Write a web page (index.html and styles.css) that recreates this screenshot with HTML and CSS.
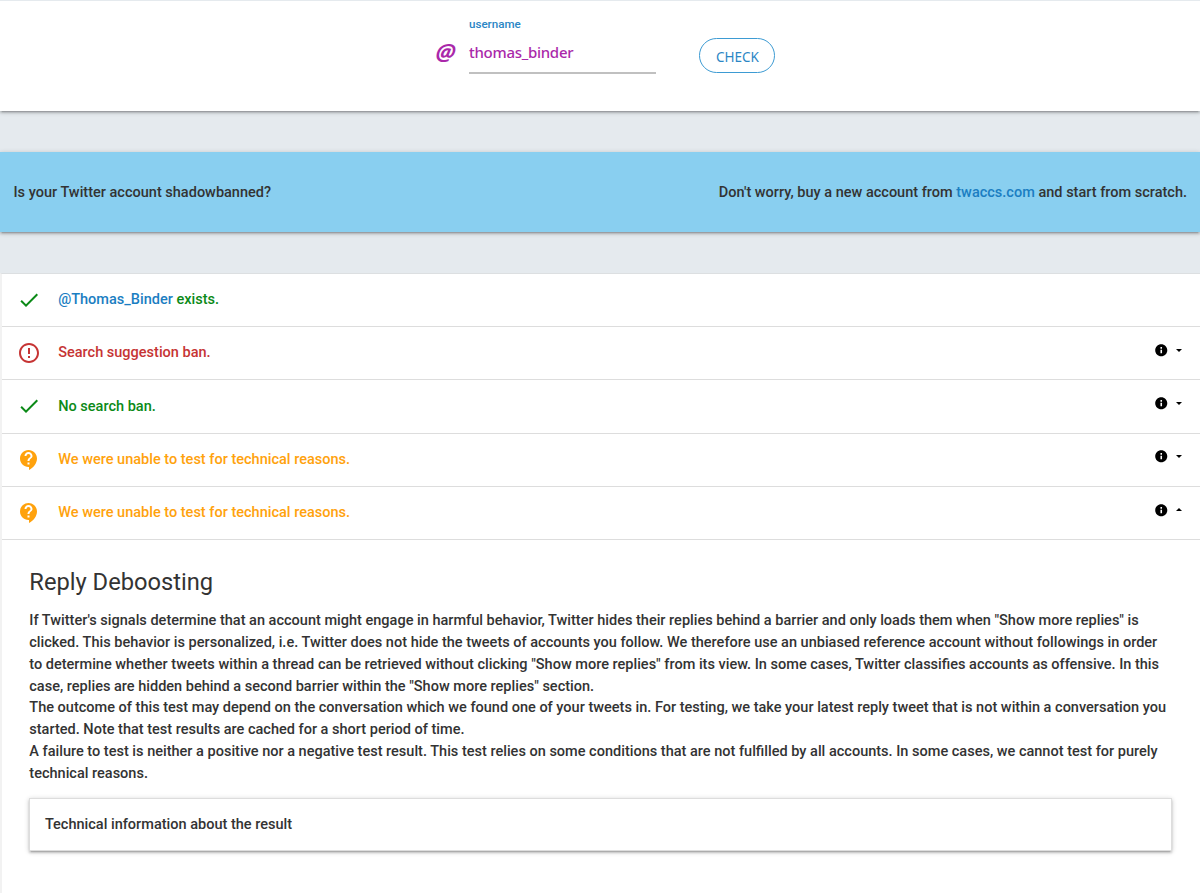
FILE: index.html
```html
<!DOCTYPE html>
<html lang="en">
<head>
<meta charset="utf-8">
<title>Shadowban Test</title>
<link rel="stylesheet" href="styles.css">
</head>
<body>
<svg class="defs" aria-hidden="true">
  <symbol id="check" viewBox="0 0 24 24"><path d="M9 16.17L4.83 12l-1.42 1.41L9 19 21 7l-1.41-1.41z"/></symbol>
  <symbol id="error" viewBox="0 0 24 24"><path d="M11 15h2v2h-2zm0-8h2v6h-2zm.99-5C6.47 2 2 6.48 2 12s4.47 10 9.99 10C17.52 22 22 17.52 22 12S17.52 2 11.99 2zM12 20c-4.42 0-8-3.58-8-8s3.58-8 8-8 8 3.58 8 8-3.58 8-8 8z"/></symbol>
  <symbol id="help" viewBox="0 0 24 24"><path d="M11.5 2C6.81 2 3 5.81 3 10.5S6.81 19 11.5 19h.5v3c4.86-2.34 8-7 8-11.5C20 5.81 16.19 2 11.5 2zm1 14.500h-2v-2h2v2zm0-3.500h-2c0-3.250 3-3 3-5 0-1.100-.9-2-2-2s-2 .9-2 2h-2c0-2.210 1.790-4 4-4s4 1.790 4 4c0 2.500-3 2.750-3 5z"/></symbol>
  <symbol id="info" viewBox="0 0 24 24"><path d="M12 2C6.480 2 2 6.480 2 12s4.480 10 10 10 10-4.480 10-10S17.520 2 12 2zm1.300 15h-2.600v-6h2.600v6zm0-7.600h-2.600V6.800h2.600v2.600z"/></symbol>
  <symbol id="down" viewBox="0 0 6 3"><path d="M0 0h6L3 3z"/></symbol>
  <symbol id="up" viewBox="0 0 6 3"><path d="M0 3h6L3 0z"/></symbol>
</svg>
<section class="search">
  <span class="at">@</span>
  <div class="field">
    <span class="label">username</span>
    <span class="value">thomas_binder</span>
  </div>
  <button class="check">CHECK</button>
</section>
<section class="promo">
  <span class="promo-question">Is your Twitter account shadowbanned?</span>
  <span class="promo-offer">Don't worry, buy a new account from <a>twaccs.com</a> and start from scratch.</span>
</section>
<section class="results">
  <div class="row ok"><svg class="icon"><use href="#check"/></svg><span class="exists"><a>@Thomas_Binder</a> exists.</span></div>
  <div class="row bad"><svg class="icon"><use href="#error"/></svg><span class="ban">Search suggestion ban.</span><span class="more"><svg class="info"><use href="#info"/></svg><svg class="caret"><use href="#down"/></svg></span></div>
  <div class="row ok"><svg class="icon"><use href="#check"/></svg><span>No search ban.</span><span class="more"><svg class="info"><use href="#info"/></svg><svg class="caret"><use href="#down"/></svg></span></div>
  <div class="row warn"><svg class="icon"><use href="#help"/></svg><span>We were unable to test for technical reasons.</span><span class="more"><svg class="info"><use href="#info"/></svg><svg class="caret"><use href="#down"/></svg></span></div>
  <div class="row warn"><svg class="icon"><use href="#help"/></svg><span>We were unable to test for technical reasons.</span><span class="more"><svg class="info"><use href="#info"/></svg><svg class="caret"><use href="#up"/></svg></span></div>
  <div class="details">
    <h2>Reply Deboosting</h2>
    <p>If Twitter's signals determine that an account might engage in harmful behavior, Twitter hides their replies behind a barrier and only loads them when "Show more replies" is<br>clicked. This behavior is personalized, i.e. Twitter does not hide the tweets of accounts you follow. We therefore use an unbiased reference account without followings in order<br>to determine whether tweets within a thread can be retrieved without clicking "Show more replies" from its view. In some cases, Twitter classifies accounts as offensive. In this<br>case, replies are hidden behind a second barrier within the "Show more replies" section.<br>The outcome of this test may depend on the conversation which we found one of your tweets in. For testing, we take your latest reply tweet that is not within a conversation you<br>started. Note that test results are cached for a short period of time.<br>A failure to test is neither a positive nor a negative test result. This test relies on some conditions that are not fulfilled by all accounts. In some cases, we cannot test for purely<br>technical reasons.</p>
    <div class="tech">Technical information about the result</div>
  </div>
</section>
</body>
</html>
```
FILE: styles.css
```css
* { box-sizing: border-box; }
body {
  margin: 0;
  height: 893px;
  overflow: hidden;
  display: flex;
  flex-direction: column;
  background: #e5eaee;
  color: #333;
  font: 500 14.52px/21.77px Roboto, sans-serif;
  white-space: nowrap;
}
a { color: #1b7ec2; }
.defs { display: none; }
svg { display: block; fill: currentColor; }
.search {
  flex: none;
  height: 111px;
  display: flex;
  align-items: flex-start;
  padding-left: 436px;
  background: #fff;
  border-top: 1px solid #e5eaee;
  box-shadow: 0 2px 2px rgba(0,0,0,.14), 0 3px 1px -2px rgba(0,0,0,.12), 0 1px 5px rgba(0,0,0,.2);
}
.at {
  width: 33px;
  padding: 39px 0 0 3px;
  font: italic 700 22.5px/24px "Open Sans", sans-serif;
  color: #aa28aa;
  transform: skewX(-9deg);
}
.field {
  width: 187px;
  height: 73px;
  display: flex;
  flex-direction: column;
  padding-top: 14px;
  border-bottom: 2px solid #c0c0c0;
}
.label { font-size: 11.6px; line-height: 19px; color: #2b86c5; }
.value { margin-top: 6px; font: 500 15px/24px "Noto Sans", sans-serif; letter-spacing: -.28px; color: #aa28aa; }
.check {
  width: 76px;
  height: 35px;
  margin: 37px 0 0 43.4px;
  padding: 2px 0 0;
  border: 1px solid #3d9bd3;
  border-radius: 18px;
  background: #fff;
  color: #2b86c5;
  font: 400 13.5px/30px "Noto Sans", sans-serif;
}
.promo {
  flex: none;
  height: 80px;
  margin-top: 41px;
  padding: 1px 13px 0 13.5px;
  display: flex;
  align-items: center;
  justify-content: space-between;
  background: #89cff0;
  box-shadow: 0 2px 2px rgba(0,0,0,.14), 0 3px 1px -2px rgba(0,0,0,.12), 0 1px 5px rgba(0,0,0,.2);
}
.results {
  flex: 1;
  margin-top: 41px;
  background: #fff;
  border-top: 1px solid #dcdfe1;
  border-left: 2px solid #f2f2f2;
}
.row {
  height: 53.2px;
  padding: 0 18px 0 15px;
  display: flex;
  align-items: center;
  border-bottom: 1px solid #ddd;
}
.icon { width: 24px; height: 24px; margin-right: 17.2px; }
.ok { color: #0b8a17; }
.bad { color: #c63434; }
.warn { color: #ffa20d; }
.more { display: flex; align-items: center; gap: 8px; margin-left: auto; padding-bottom: 6px; color: #000; }
.info { width: 14.500px; height: 14.500px; }
.caret { width: 6px; height: 3px; }
.details { padding: 24px 28px 0 27.3px; }
h2 { margin: 0; font: 400 23.7px/36px Roboto, sans-serif; }
p { margin: 10.3px 0 0; }
.tech {
  height: 53px;
  margin-top: 13.5px;
  padding: 0 14.6px;
  line-height: 52px;
  border: 1px solid #ddd;
  box-shadow: 0 2px 2px rgba(0,0,0,.14), 0 3px 1px -2px rgba(0,0,0,.12), 0 1px 5px rgba(0,0,0,.2);
}
```
